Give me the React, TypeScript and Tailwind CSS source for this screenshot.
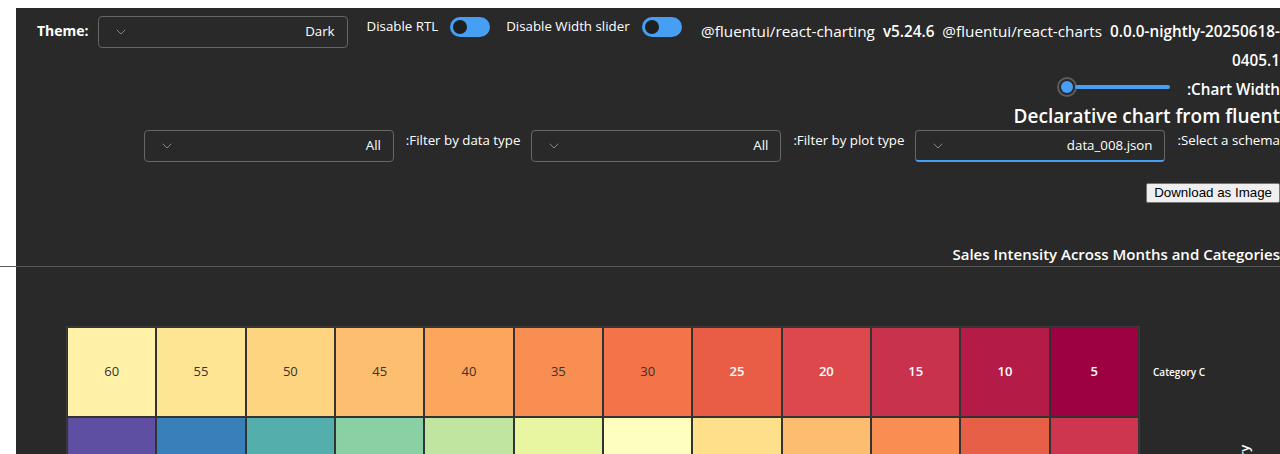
import { ChevronDown } from 'lucide-react';

const FONT = "font-['Segoe_UI','Open_Sans',sans-serif]";

const ROW_ONE = [
    { v: 60, bg: 'bg-[#fff2a8]', light: false },
    { v: 55, bg: 'bg-[#fee593]', light: false },
    { v: 50, bg: 'bg-[#fed481]', light: false },
    { v: 45, bg: 'bg-[#fdbe6f]', light: false },
    { v: 40, bg: 'bg-[#fca65d]', light: false },
    { v: 35, bg: 'bg-[#f98e52]', light: false },
    { v: 30, bg: 'bg-[#f47348]', light: false },
    { v: 25, bg: 'bg-[#e95d47]', light: true },
    { v: 20, bg: 'bg-[#dc484c]', light: true },
    { v: 15, bg: 'bg-[#c9324d]', light: true },
    { v: 10, bg: 'bg-[#b41b47]', light: true },
    { v: 5, bg: 'bg-[#9e0142]', light: true },
];

const ROW_TWO = [
    'bg-[#5e4fa2]', 'bg-[#3880b9]', 'bg-[#54aeac]', 'bg-[#89d0a4]', 'bg-[#bfe5a0]', 'bg-[#e9f6a1]',
    'bg-[#feffbe]', 'bg-[#fee08b]', 'bg-[#fdbd6f]', 'bg-[#f98e52]', 'bg-[#e85f48]', 'bg-[#cd364e]',
];

const Dropdown = ({ value, focused = false }: { value: string; focused?: boolean }) => (
    <div
        className={`w-[250px] h-8 shrink-0 rounded-[4px] border border-[#666666] flex items-center justify-between pl-[14px] pr-3 ${focused ? 'border-b-2 border-b-[#479ef5]' : ''}`}
    >
        <ChevronDown size={16} strokeWidth={1.25} className="text-[#9a9a9a]" />
        <span className="text-[13.3px] text-white">{value}</span>
    </div>
);

const Toggle = () => (
    <div className="w-10 h-5 rounded-full bg-[#479ef5] flex items-center px-[3px] shrink-0">
        <div className="w-[14px] h-[14px] rounded-full bg-[#1f1f1f]" />
    </div>
);

export default function App() {
    return (
        <div className={`w-[1280px] h-[454px] overflow-hidden bg-white pt-2 pl-4 ${FONT}`}>
            <div className="bg-[#292929] h-full text-white">
                {/* Top row */}
                <div className="flex items-start pt-2">
                    <span className="ml-[21px] mt-[4px] text-[14px] font-bold">Theme:</span>
                    <div className="ml-[9px]">
                        <Dropdown value="Dark" />
                    </div>
                    <span className="ml-[19px] mt-[1px] text-[13.3px]">Disable RTL</span>
                    <div className="ml-[12px] mt-[1px]"><Toggle /></div>
                    <span className="ml-4 mt-[1px] text-[13.3px]">Disable Width slider</span>
                    <div className="ml-[12px] mt-[1px]"><Toggle /></div>
                    <p className="ml-4 mt-[1px] flex-1 text-right text-[15.3px] leading-[29px]">
                        @fluentui/react-charting&nbsp; <span className="font-semibold">v5.24.6</span>&nbsp; @fluentui/react-charts&nbsp; <span className="font-semibold">0.0.0-nightly-20250618-0405.1</span>
                    </p>
                </div>

                {/* Chart width slider */}
                <div className="flex items-center justify-end h-6">
                    <div className="flex items-center">
                        <div className="w-5 h-5 rounded-full border-2 border-[#5c5c5c] bg-[#292929] flex items-center justify-center">
                            <div className="w-3 h-3 rounded-full bg-[#479ef5]" />
                        </div>
                        <div className="w-[95px] h-1 rounded-full bg-[#479ef5] -ml-[2px]" />
                    </div>
                    <span className="ml-[17px] mt-[5px] text-[15.3px] font-semibold">:Chart Width</span>
                </div>

                {/* Heading */}
                <h1 className="text-right text-[19px] font-semibold leading-[28px] mt-[3px]">Declarative chart from fluent</h1>

                {/* Filters */}
                <div className="flex items-start justify-end">
                    <Dropdown value="All" />
                    <span className="ml-3 mt-[1px] text-[13.3px]">:Filter by data type</span>
                    <div className="ml-[11px]"><Dropdown value="All" /></div>
                    <span className="ml-3 mt-[1px] text-[13.3px]">:Filter by plot type</span>
                    <div className="ml-[11px]"><Dropdown value="data_008.json" focused /></div>
                    <span className="ml-3 mt-[1px] text-[13.3px]">:Select a schema</span>
                </div>

                <div className="flex justify-end mt-[21px]">
                    <button className="h-5 px-[7px] bg-[#efefef] border border-[#767676] rounded-[2px] text-black text-[13.33px] leading-none font-['Liberation_Sans',Arial,sans-serif]">
                        Download as Image
                    </button>
                </div>

                {/* Chart title */}
                <div className="-ml-4 mt-[39px] border-b border-[#5a5a5a] text-right">
                    <span className="text-[15px] font-semibold leading-[20px]">Sales Intensity Across Months and Categories</span>
                </div>

                {/* Heatmap */}
                <div className="flex items-start mt-[59px] ml-[50px]">
                    <div className="w-[1074px] shrink-0 grid grid-cols-12 border border-[#3a3a3a]">
                        {ROW_ONE.map((c) => (
                            <div
                                key={c.v}
                                className={`h-[90px] border border-[#333333] flex items-center justify-center text-[13px] ${c.bg} ${c.light ? 'text-white font-semibold' : 'text-[#333333]'}`}
                            >
                                {c.v}
                            </div>
                        ))}
                        {ROW_TWO.map((bg, i) => (
                            <div key={i} className={`h-[90px] border border-[#333333] ${bg}`} />
                        ))}
                    </div>
                    <div className="relative flex-1 h-[130px]">
                        <span className="absolute left-[13px] top-[39px] text-[10px] font-semibold">Category C</span>
                        <span className="absolute left-[95px] top-[175px] -rotate-90 origin-top-left text-[13px] font-semibold">Category</span>
                    </div>
                </div>
            </div>
        </div>
    );
}
